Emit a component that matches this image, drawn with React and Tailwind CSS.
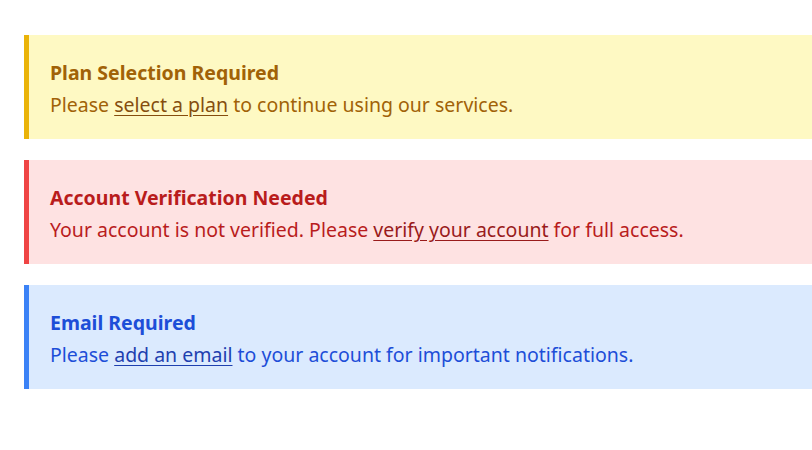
import React from 'react';

const alerts = [
    {
        title: 'Plan Selection Required',
        before: 'Please ',
        link: 'select a plan',
        after: ' to continue using our services.',
        box: 'bg-[#fef9c3] border-[#eab308] text-[#a16207]',
        link_c: 'text-[#854d0e] decoration-[#854d0e]',
    },
    {
        title: 'Account Verification Needed',
        before: 'Your account is not verified. Please ',
        link: 'verify your account',
        after: ' for full access.',
        box: 'bg-[#fee2e2] border-[#ef4444] text-[#b91c1c]',
        link_c: 'text-[#991b1b] decoration-[#991b1b]',
    },
    {
        title: 'Email Required',
        before: 'Please ',
        link: 'add an email',
        after: ' to your account for important notifications.',
        box: 'bg-[#dbeafe] border-[#3b82f6] text-[#1d4ed8]',
        link_c: 'text-[#1e40af] decoration-[#1e40af]',
    },
];

function App() {
    return (
        <div className="min-h-screen bg-white pt-[35px] pl-6" style={{ fontFamily: '"Noto Sans", "Open Sans", sans-serif' }}>
            {alerts.map((a, i) => (
                <div key={i} className={`border-l-[5px] ${a.box} h-[104px] mb-[21px] pl-[21px] pt-6`}>
                    <div className="font-bold text-[19.5px] leading-7">{a.title}</div>
                    <div className="text-[19.5px] leading-7 mt-[4px]">
                        {a.before}
                        <a href="#" className={`underline underline-offset-[3px] ${a.link_c}`}>{a.link}</a>
                        {a.after}
                    </div>
                </div>
            ))}
        </div>
    );
}

export default App;
